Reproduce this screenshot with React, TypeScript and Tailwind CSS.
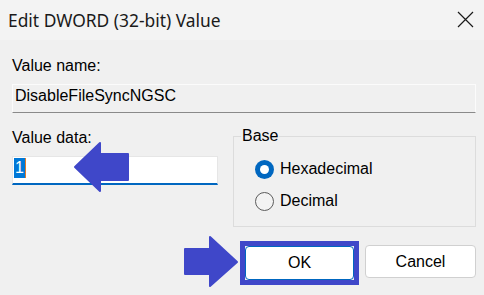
import React from "react";

const sans = { fontFamily: '"Liberation Sans", Arial, sans-serif' };

function Radio({ checked, label }: { checked: boolean; label: string }) {
  return (
    <div className="flex items-center h-[20px]">
      {checked ? (
        <span className="w-[19px] h-[19px] rounded-full bg-[#0067c0] flex items-center justify-center">
          <span className="w-[9px] h-[9px] rounded-full bg-white" />
        </span>
      ) : (
        <span className="w-[19px] h-[19px] rounded-full border border-[#5c5c5c] bg-[#f3f3f3]" />
      )}
      <span className="ml-[6px] text-[16px] leading-[20px] text-black">{label}</span>
    </div>
  );
}

export default function App() {
  return (
    <div className="w-[484px] h-[295px] overflow-hidden relative bg-[#f0f0f0]" style={sans}>
      {/* Title bar */}
      <div className="h-[40px] bg-[#f3f3f3] flex items-center justify-between pl-[8px] pr-[10px]">
        <span
          className="text-[17.4px] leading-[22px] text-[#1a1a1a]"
          style={{ fontFamily: '"Noto Sans", "Open Sans", sans-serif' }}
        >
          Edit DWORD (32-bit) Value
        </span>
        <svg width="17" height="17" viewBox="0 0 17 17" className="mb-[2px]">
          <path d="M1 1 L16 16 M16 1 L1 16" stroke="#1a1a1a" strokeWidth="1.2" fill="none" />
        </svg>
      </div>

      {/* Body */}
      <div className="pt-[17px] pl-[12px] pr-[8px] flex flex-col text-[16px] text-black">
        <div className="leading-[18px]">Value name:</div>
        <div className="mt-[9px] h-[29px] border border-[#fbfbfb] border-b-[#8a8a8a] bg-[#f0f0f0] pl-[2px] pt-[2px] leading-[18px]">
          DisableFileSyncNGSC
        </div>

        <div className="mt-[14px] flex">
          <div className="w-[206px] flex flex-col pt-[2px]">
            <div className="leading-[18px]">Value data:</div>
            <div className="mt-[9px] h-[29px] bg-white border border-[#e6e6e6] border-b-2 border-b-[#0067c0] pl-[1px] pt-[1px] flex items-start">
              <span className="bg-[#0078d7] text-white leading-[20px] px-[1px]">1</span>
              <span className="w-[1px] h-[20px] bg-[#e07a2a]" />
            </div>
          </div>

          <fieldset className="ml-[15px] w-[243px] h-[100px] border border-[#dcdcdc] pl-[7px]">
            <legend className="px-[1px] leading-[18px]">Base</legend>
            <div className="pl-[14px] pt-[14px] flex flex-col gap-[12px]">
              <Radio checked label="Hexadecimal" />
              <Radio checked={false} label="Decimal" />
            </div>
          </fieldset>
        </div>

        <div className="mt-[14px] flex justify-end items-start">
          <div className="w-[119px] h-[44px] border-[5px] border-[#3f47c9] flex">
            <button className="w-full h-full bg-white border border-[#0067c0] rounded-[4px] text-[16px] text-black leading-[18px]">
              OK
            </button>
          </div>
          <button className="ml-[6px] mt-[4px] w-[111px] h-[33px] bg-white border border-[#d0d0d0] rounded-[4px] text-[16px] text-black leading-[18px]">
            Cancel
          </button>
        </div>
      </div>

      {/* Annotation arrows */}
      <svg
        className="absolute left-0 top-0 pointer-events-none"
        width="484"
        height="295"
        viewBox="0 0 484 295"
      >
        <polygon
          points="75,167 100,143 100,154 128,154 128,180 100,180 100,191"
          fill="#3f47c9"
          stroke="#3f47c9"
          strokeWidth="2"
          strokeLinejoin="round"
        />
        <polygon
          points="185,249 210,249 210,237 237,262 210,286 210,274 185,274"
          fill="#3f47c9"
          stroke="#3f47c9"
          strokeWidth="2"
          strokeLinejoin="round"
        />
      </svg>
    </div>
  );
}
